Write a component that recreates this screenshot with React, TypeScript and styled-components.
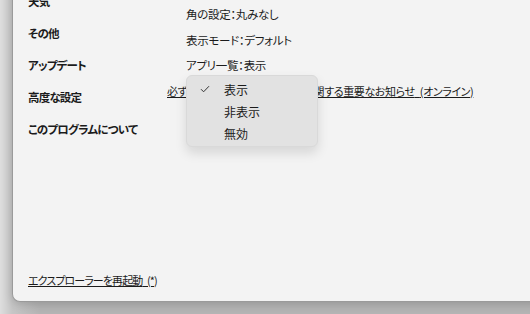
import React from "react";
import styled, { createGlobalStyle } from "styled-components";

const GlobalStyle = createGlobalStyle`
  html, body {
    margin: 0;
    padding: 0;
    background: #b8b8b8;
  }
  body {
    font-family: "Noto Sans CJK JP", "Noto Sans", sans-serif;
    font-feature-settings: "palt";
    color: #1b1b1b;
  }
`;

const sideItems = ["天気", "その他", "アップデート", "高度な設定", "このプログラムについて"];

const settings = ["角の設定：丸みなし", "表示モード：デフォルト", "アプリ一覧：表示"];

const menuItems = [
  { label: "表示", checked: true },
  { label: "非表示", checked: false },
  { label: "無効", checked: false },
];

const App = () => {
  return (
    <St.Desktop>
      <GlobalStyle />
      <St.Window>
        <St.Sidebar>
          <St.NavList>
            {sideItems.map((item) => (
              <St.NavItem key={item}>{item}</St.NavItem>
            ))}
          </St.NavList>
          <St.Link>エクスプローラーを再起動{"\u2002"}(*)</St.Link>
        </St.Sidebar>
        <St.Content>
          {settings.map((s) => (
            <St.Row key={s}>{s}</St.Row>
          ))}
          <St.NoticeLink>
            必ずお読みください： この機能に関する重要なお知らせ{"\u2002"}(オンライン)
          </St.NoticeLink>
          <St.Menu>
            {menuItems.map((m) => (
              <St.MenuItem key={m.label}>
                <St.Check>
                  {m.checked && (
                    <svg width="10" height="8" viewBox="0 0 10 8" fill="none">
                      <path d="M1 4.2L3.6 6.8L9 1.2" stroke="#333" strokeWidth="1" />
                    </svg>
                  )}
                </St.Check>
                {m.label}
              </St.MenuItem>
            ))}
          </St.Menu>
        </St.Content>
      </St.Window>
    </St.Desktop>
  );
};

export default App;

const St = {
  Desktop: styled.div`
    width: 530px;
    height: 314px;
    overflow: hidden;
    padding-left: 12px;
    box-sizing: border-box;
    background: linear-gradient(to right, #dedede 0px, #c6c6c6 12px, #b4b4b4 40px);
  `,
  Window: styled.div`
    margin-top: -20px;
    width: 540px;
    height: 322px;
    box-sizing: border-box;
    background: #f3f3f3;
    border: 1px solid #9a9a9a;
    border-top: none;
    border-radius: 0 0 0 8px;
    box-shadow: 0 2px 10px rgba(0, 0, 0, 0.18);
    display: flex;
  `,
  Sidebar: styled.div`
    width: 143px;
    padding: 5px 0 13px 15px;
    display: flex;
    flex-direction: column;
    justify-content: space-between;
  `,
  NavList: styled.div`
    display: flex;
    flex-direction: column;
  `,
  NavItem: styled.div`
    height: 32px;
    line-height: 32px;
    font-size: 11.5px;
    font-weight: 700;
    letter-spacing: -0.8px;
    white-space: nowrap;
  `,
  Link: styled.div`
    font-size: 11px;
    line-height: 16px;
    letter-spacing: -0.9px;
    text-decoration: underline;
    white-space: nowrap;
  `,
  Content: styled.div`
    position: relative;
    padding-top: 22px;
    display: flex;
    flex-direction: column;
    align-items: flex-start;
  `,
  Row: styled.div`
    margin-left: 15px;
    height: 25.5px;
    line-height: 25.5px;
    font-size: 11.5px;
    letter-spacing: -0.3px;
    white-space: nowrap;
  `,
  NoticeLink: styled.div`
    margin-left: -4px;
    height: 25.5px;
    line-height: 25.5px;
    font-size: 11px;
    letter-spacing: -0.4px;
    text-decoration: underline;
    white-space: nowrap;
  `,
  Menu: styled.div`
    position: absolute;
    left: 15px;
    top: 95px;
    width: 132px;
    height: 72px;
    box-sizing: border-box;
    padding-top: 2px;
    background: #e2e2e2;
    border: 1px solid #d9d9d9;
    border-radius: 6px;
    box-shadow: 0 6px 12px rgba(0, 0, 0, 0.12);
  `,
  MenuItem: styled.div`
    display: flex;
    align-items: center;
    height: 22px;
    font-size: 12px;
    color: #1b1b1b;
  `,
  Check: styled.span`
    width: 37px;
    padding-left: 13px;
    box-sizing: border-box;
    display: flex;
    align-items: center;
  `,
};
